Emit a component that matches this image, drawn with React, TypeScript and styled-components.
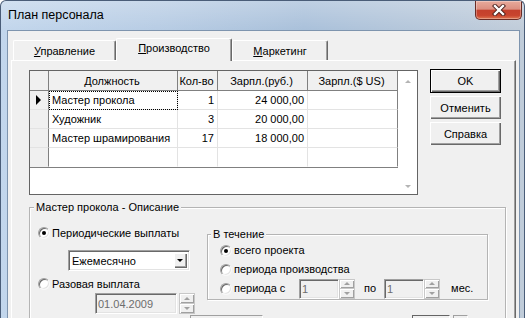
import React from "react";
import styled, { createGlobalStyle } from "styled-components";

const GlobalStyle = createGlobalStyle`
  html, body {
    margin: 0;
    padding: 0;
  }
  body {
    width: 525px;
    height: 318px;
    overflow: hidden;
    font-family: "Liberation Sans", Arial, sans-serif;
    font-size: 11px;
    color: #000;
    background: #fff;
  }
`;

const Window = styled.div`
  width: 525px;
  height: 318px;
  box-sizing: border-box;
  overflow: hidden;
  display: flex;
  flex-direction: column;
  border: 1px solid #4a5d78;
  border-bottom: none;
  border-radius: 6px 6px 0 0;
  background:
    linear-gradient(to bottom, rgba(255, 255, 255, 0.25), rgba(255, 255, 255, 0) 30px),
    linear-gradient(90deg, #c2d6ec 0%, #b7cce4 30%, #a9c0da 58%, #b6c7da 82%, #c0ccd9 100%);
`;

const TitleBar = styled.div`
  flex: 0 0 29px;
  display: flex;
  align-items: flex-start;
  padding-left: 7px;
`;

const TitleText = styled.div`
  margin-top: 7px;
  font-size: 12.5px;
  line-height: 15px;
`;

const CloseButton = styled.div`
  margin-left: auto;
  margin-right: 2px;
  width: 47px;
  height: 19px;
  box-sizing: border-box;
  border: 1px solid #6a2c25;
  border-top: none;
  border-radius: 0 0 5px 5px;
  background: linear-gradient(to bottom, #e8aa9c 0%, #dc8f80 45%, #c4402c 52%, #c8442e 80%, #de7650 100%);
  box-shadow: inset 0 0 0 1px rgba(255, 255, 255, 0.3);
  display: flex;
  align-items: center;
  justify-content: center;
`;

const Frame = styled.div`
  flex: 1;
  display: flex;
  min-height: 0;
  padding: 0 4px 0 6px;
`;

const Client = styled.div`
  flex: 1;
  min-width: 0;
  display: flex;
  flex-direction: column;
  background: #f0f0f0;
  border: 1px solid #7e94ae;
  border-bottom: none;
  padding: 7px 3px 0 3px;
`;

const TabStrip = styled.div`
  display: flex;
  align-items: flex-end;
  height: 22px;
  padding-left: 2px;
`;

const Tab = styled.div<{ $active?: boolean; $width: number }>`
  position: relative;
  z-index: ${(p) => (p.$active ? 1 : 0)};
  width: ${(p) => p.$width}px;
  height: ${(p) => (p.$active ? 23 : 20)}px;
  margin-bottom: ${(p) => (p.$active ? -1 : 0)}px;
  box-sizing: border-box;
  padding-top: ${(p) => (p.$active ? 3 : 4)}px;
  background: #f0f0f0;
  border-top: 1px solid #fff;
  border-left: 1px solid #fff;
  border-right: 1px solid #696969;
  border-radius: 2px 2px 0 0;
  box-shadow: inset -1px 0 0 #a0a0a0;
  text-align: center;
  line-height: 13px;
`;

const TabPage = styled.div`
  flex: 1;
  min-height: 0;
  border-top: 1px solid #fff;
  border-left: 1px solid #fff;
  border-right: 1px solid #696969;
  box-shadow: inset -1px 0 0 #a0a0a0;
  padding: 9px 8px 0 17px;
`;

const TopRow = styled.div`
  display: flex;
  align-items: flex-start;
`;

const GridBox = styled.div`
  width: 389px;
  height: 125px;
  box-sizing: border-box;
  border: 1px solid #646464;
  background: #fff;
  display: flex;
  align-items: flex-start;
`;

const GridTable = styled.div`
  display: flex;
  flex-direction: column;
  border-bottom: 1px solid #808080;
`;

const GridRow = styled.div<{ $header?: boolean }>`
  display: flex;
  height: ${(p) => (p.$header ? 20 : 19)}px;
`;

const Cell = styled.div<{
  $width: number;
  $kind: "header" | "indicator" | "data";
  $align?: "left" | "center" | "right";
  $last?: boolean;
  $focus?: boolean;
  $lastRow?: boolean;
}>`
  width: ${(p) => p.$width}px;
  box-sizing: border-box;
  display: flex;
  align-items: center;
  justify-content: ${(p) =>
    p.$align === "right" ? "flex-end" : p.$align === "center" ? "center" : "flex-start"};
  padding: 0 ${(p) => (p.$align === "right" ? 3 : 2)}px 0 ${(p) => (p.$align === "left" ? 3 : 0)}px;
  white-space: nowrap;
  background: ${(p) => (p.$kind === "data" ? "#fff" : "#f0f0f0")};
  border-right: 1px solid
    ${(p) => (p.$kind === "data" && !p.$last ? "#e3e3e3" : "#808080")};
  border-bottom: 1px solid
    ${(p) => (p.$kind === "header" ? "#808080" : p.$lastRow ? "transparent" : "#e3e3e3")};
  outline: ${(p) => (p.$focus ? "1px dotted #000" : "none")};
  outline-offset: -1px;
`;

const Indicator = styled.span`
  width: 0;
  height: 0;
  margin-left: 6px;
  border-top: 5px solid transparent;
  border-bottom: 5px solid transparent;
  border-left: 5px solid #000;
`;

const ScrollColumn = styled.div`
  width: 19px;
  height: 123px;
  box-sizing: border-box;
  display: flex;
  flex-direction: column;
  align-items: center;
  justify-content: space-between;
  padding: 9px 0 6px;
`;

const ScrollArrow = styled.span<{ $down?: boolean }>`
  width: 0;
  height: 0;
  border-left: 3px solid transparent;
  border-right: 3px solid transparent;
  ${(p) => (p.$down ? "border-top: 3px solid #b4b4b4;" : "border-bottom: 3px solid #b4b4b4;")}
`;

const ButtonColumn = styled.div`
  display: flex;
  flex-direction: column;
  gap: 3px;
  margin-left: 12px;
  margin-top: -1px;
`;

const DialogButton = styled.div<{ $default?: boolean }>`
  width: 71px;
  height: ${(p) => (p.$default ? 24 : 23)}px;
  box-sizing: border-box;
  display: flex;
  align-items: center;
  justify-content: center;
  background: #f0f0f0;
  border: ${(p) => (p.$default ? "1px solid #000" : "none")};
  box-shadow: inset 1px 1px 0 #fff, inset -1px -1px 0 #696969, inset -2px -2px 0 #a0a0a0;
`;

const GroupBox = styled.fieldset<{ $inner?: boolean }>`
  margin: ${(p) => (p.$inner ? "2px 0 0" : "5px 0 0")};
  padding: 0 0 ${(p) => (p.$inner ? 1 : 0)}px ${(p) => (p.$inner ? 3 : 4)}px;
  min-width: 0;
  width: ${(p) => (p.$inner ? 281 : 477)}px;
  box-sizing: border-box;
  border: 1px solid #b4b4b4;
  box-shadow: inset 1px 1px 0 #fff, 1px 1px 0 #fff;
`;

const Legend = styled.legend`
  padding: 0 2px;
  line-height: 14px;
  background: #f0f0f0;
`;

const OuterContent = styled.div`
  padding: 11px 0 0 4px;
`;

const GroupContent = styled.div`
  display: flex;
  align-items: flex-start;
`;

const LeftColumn = styled.div`
  width: 169px;
  flex: 0 0 169px;
  display: flex;
  flex-direction: column;
`;

const InnerContent = styled.div`
  padding-left: 9px;
`;

const RadioRow = styled.div<{ $height?: number; $top?: number }>`
  display: flex;
  align-items: center;
  height: ${(p) => p.$height ?? 19}px;
  margin-top: ${(p) => p.$top ?? 0}px;
  white-space: nowrap;
`;

const RadioCircle = styled.span<{ $checked?: boolean }>`
  width: 12px;
  height: 12px;
  flex: 0 0 12px;
  box-sizing: border-box;
  border-radius: 50%;
  margin-right: 2px;
  background: #fff;
  border: 1px solid;
  border-color: #a0a0a0 #f8f8f8 #f8f8f8 #a0a0a0;
  box-shadow: inset 1px 1px 0 #696969, inset -1px -1px 0 #e3e3e3;
  display: flex;
  align-items: center;
  justify-content: center;
  &::after {
    content: "";
    display: ${(p) => (p.$checked ? "block" : "none")};
    width: 4px;
    height: 4px;
    border-radius: 50%;
    background: #000;
  }
`;

const RadioText = styled.span<{ $width?: number }>`
  line-height: 13px;
  ${(p) => (p.$width ? `width: ${p.$width}px;` : "")}
`;

const Sunken = styled.div<{ $width: number; $height?: number; $disabled?: boolean; $gap?: number }>`
  width: ${(p) => p.$width}px;
  height: ${(p) => p.$height ?? 20}px;
  margin-left: ${(p) => p.$gap ?? 0}px;
  flex: 0 0 auto;
  box-sizing: border-box;
  display: flex;
  align-items: center;
  padding-left: 2px;
  background: ${(p) => (p.$disabled ? "#f0f0f0" : "#fff")};
  color: ${(p) => (p.$disabled ? "#6d6d6d" : "#000")};
  border: 1px solid;
  border-color: #a0a0a0 #fff #fff #a0a0a0;
  box-shadow: inset 1px 1px 0 #696969, inset -1px -1px 0 #e3e3e3;
  white-space: nowrap;
`;

const Dropdown = styled(Sunken)`
  margin: 9px 0 0 30px;
  padding: 2px;
  justify-content: space-between;
`;

const DropText = styled.span`
  padding-left: 1px;
`;

const DropButton = styled.span`
  width: 13px;
  height: 15px;
  box-sizing: border-box;
  background: #f0f0f0;
  box-shadow: inset 1px 1px 0 #fff, inset -1px -1px 0 #696969, inset -2px -2px 0 #a0a0a0;
  display: flex;
  align-items: center;
  justify-content: center;
  &::after {
    content: "";
    width: 0;
    height: 0;
    margin: 0 1px 1px 0;
    border-left: 3px solid transparent;
    border-right: 3px solid transparent;
    border-top: 3px solid #000;
  }
`;

const FieldRow = styled.div<{ $left?: number; $top?: number }>`
  display: flex;
  align-items: center;
  margin-left: ${(p) => p.$left ?? 0}px;
  margin-top: ${(p) => p.$top ?? 0}px;
`;

const Spinner = styled.div<{ $height?: number; $gap?: number }>`
  width: 16px;
  height: ${(p) => p.$height ?? 20}px;
  margin-left: ${(p) => p.$gap ?? 0}px;
  display: flex;
  flex-direction: column;
`;

const SpinHalf = styled.span<{ $down?: boolean }>`
  flex: 1;
  box-sizing: border-box;
  background: #f0f0f0;
  box-shadow: inset 1px 1px 0 #fff, inset -1px -1px 0 #a0a0a0;
  border: 1px solid #c8c8c8;
  ${(p) => (p.$down ? "border-top: none;" : "")}
  display: flex;
  align-items: center;
  justify-content: center;
  &::after {
    content: "";
    width: 0;
    height: 0;
    border-left: 3px solid transparent;
    border-right: 3px solid transparent;
    ${(p) => (p.$down ? "border-top: 3px solid #a0a0a0;" : "border-bottom: 3px solid #a0a0a0;")}
  }
`;

const Caption = styled.span<{ $left: number }>`
  margin-left: ${(p) => p.$left}px;
  line-height: 13px;
`;

const BottomRow = styled.div`
  display: flex;
  margin: 1px 0 0 152px;
`;

const CutField = styled.div<{ $width: number; $dark?: boolean; $gap?: number }>`
  width: ${(p) => p.$width}px;
  height: 20px;
  margin-left: ${(p) => p.$gap ?? 0}px;
  box-sizing: border-box;
  border: 1px solid ${(p) => (p.$dark ? "#646464" : "#a0a0a0")};
  border-right-color: #fff;
  background: #f0f0f0;
`;

type Row = { name: string; qty: string; rub: string; usd: string };

const rows: Row[] = [
  { name: "Мастер прокола", qty: "1", rub: "24 000,00", usd: "" },
  { name: "Художник", qty: "3", rub: "20 000,00", usd: "" },
  { name: "Мастер шрамирования", qty: "17", rub: "18 000,00", usd: "" },
  { name: "", qty: "", rub: "", usd: "" },
];

const widths = [19, 129, 40, 90, 90];

const CloseGlyph = () => (
  <svg width="14" height="12" viewBox="0 0 14 12">
    <path d="M3 2 L11 10 M11 2 L3 10" stroke="#4a1f1a" strokeWidth="4.2" strokeLinecap="square" />
    <path d="M3 2 L11 10 M11 2 L3 10" stroke="#fff" strokeWidth="2.4" strokeLinecap="square" />
  </svg>
);

const SpinBox = ({ height, gap }: { height?: number; gap?: number }) => (
  <Spinner $height={height} $gap={gap}>
    <SpinHalf />
    <SpinHalf $down />
  </Spinner>
);

const DataGrid = () => (
  <GridBox>
    <GridTable>
      <GridRow $header>
        <Cell $width={widths[0]} $kind="header" />
        <Cell $width={widths[1]} $kind="header" $align="center">Должность</Cell>
        <Cell $width={widths[2]} $kind="header" $align="center">Кол-во</Cell>
        <Cell $width={widths[3]} $kind="header" $align="center">Зарпл.(руб.)</Cell>
        <Cell $width={widths[4]} $kind="header" $align="center" $last>Зарпл.($ US)</Cell>
      </GridRow>
      {rows.map((r, i) => {
        const lastRow = i === rows.length - 1;
        return (
          <GridRow key={i}>
            <Cell $width={widths[0]} $kind="indicator" $lastRow={lastRow}>
              {i === 0 && <Indicator />}
            </Cell>
            <Cell $width={widths[1]} $kind="data" $align="left" $focus={i === 0} $lastRow={lastRow}>
              {r.name}
            </Cell>
            <Cell $width={widths[2]} $kind="data" $align="right" $lastRow={lastRow}>{r.qty}</Cell>
            <Cell $width={widths[3]} $kind="data" $align="right" $lastRow={lastRow}>{r.rub}</Cell>
            <Cell $width={widths[4]} $kind="data" $align="right" $last $lastRow={lastRow}>{r.usd}</Cell>
          </GridRow>
        );
      })}
    </GridTable>
    <ScrollColumn>
      <ScrollArrow />
      <ScrollArrow $down />
    </ScrollColumn>
  </GridBox>
);

export default function App() {
  return (
    <>
      <GlobalStyle />
      <Window>
        <TitleBar>
          <TitleText>План персонала</TitleText>
          <CloseButton>
            <CloseGlyph />
          </CloseButton>
        </TitleBar>
        <Frame>
          <Client>
            <TabStrip>
              <Tab $width={103}><u>У</u>правление</Tab>
              <Tab $width={116} $active><u>П</u>роизводство</Tab>
              <Tab $width={96}><u>М</u>аркетинг</Tab>
            </TabStrip>
            <TabPage>
              <TopRow>
                <DataGrid />
                <ButtonColumn>
                  <DialogButton $default>OK</DialogButton>
                  <DialogButton>Отменить</DialogButton>
                  <DialogButton>Справка</DialogButton>
                </ButtonColumn>
              </TopRow>
              <GroupBox>
                <Legend>Мастер прокола - Описание</Legend>
                <OuterContent>
                  <GroupContent>
                    <LeftColumn>
                      <RadioRow $height={16}>
                        <RadioCircle $checked />
                        <RadioText>Периодические выплаты</RadioText>
                      </RadioRow>
                      <Dropdown $width={122} $height={21}>
                        <DropText>Ежемесячно</DropText>
                        <DropButton />
                      </Dropdown>
                      <RadioRow $height={16} $top={5}>
                        <RadioCircle />
                        <RadioText>Разовая выплата</RadioText>
                      </RadioRow>
                      <FieldRow $left={57} $top={1}>
                        <Sunken $width={82} $height={21} $disabled>01.04.2009</Sunken>
                        <SpinBox height={21} gap={2} />
                      </FieldRow>
                    </LeftColumn>
                    <GroupBox $inner>
                      <Legend>В течение</Legend>
                      <InnerContent>
                        <RadioRow>
                          <RadioCircle $checked />
                          <RadioText>всего проекта</RadioText>
                        </RadioRow>
                        <RadioRow>
                          <RadioCircle />
                          <RadioText>периода производства</RadioText>
                        </RadioRow>
                        <RadioRow>
                          <RadioCircle />
                          <RadioText $width={65}>периода с</RadioText>
                          <Sunken $width={40} $disabled>1</Sunken>
                          <SpinBox />
                          <Caption $left={9}>по</Caption>
                          <Sunken $width={40} $disabled $gap={8}>1</Sunken>
                          <SpinBox />
                          <Caption $left={11}>мес.</Caption>
                        </RadioRow>
                      </InnerContent>
                    </GroupBox>
                  </GroupContent>
                  <BottomRow>
                    <CutField $width={73} />
                    <CutField $width={38} $dark $gap={149} />
                    <CutField $width={15} $gap={3} />
                  </BottomRow>
                </OuterContent>
              </GroupBox>
            </TabPage>
          </Client>
        </Frame>
      </Window>
    </>
  );
}
